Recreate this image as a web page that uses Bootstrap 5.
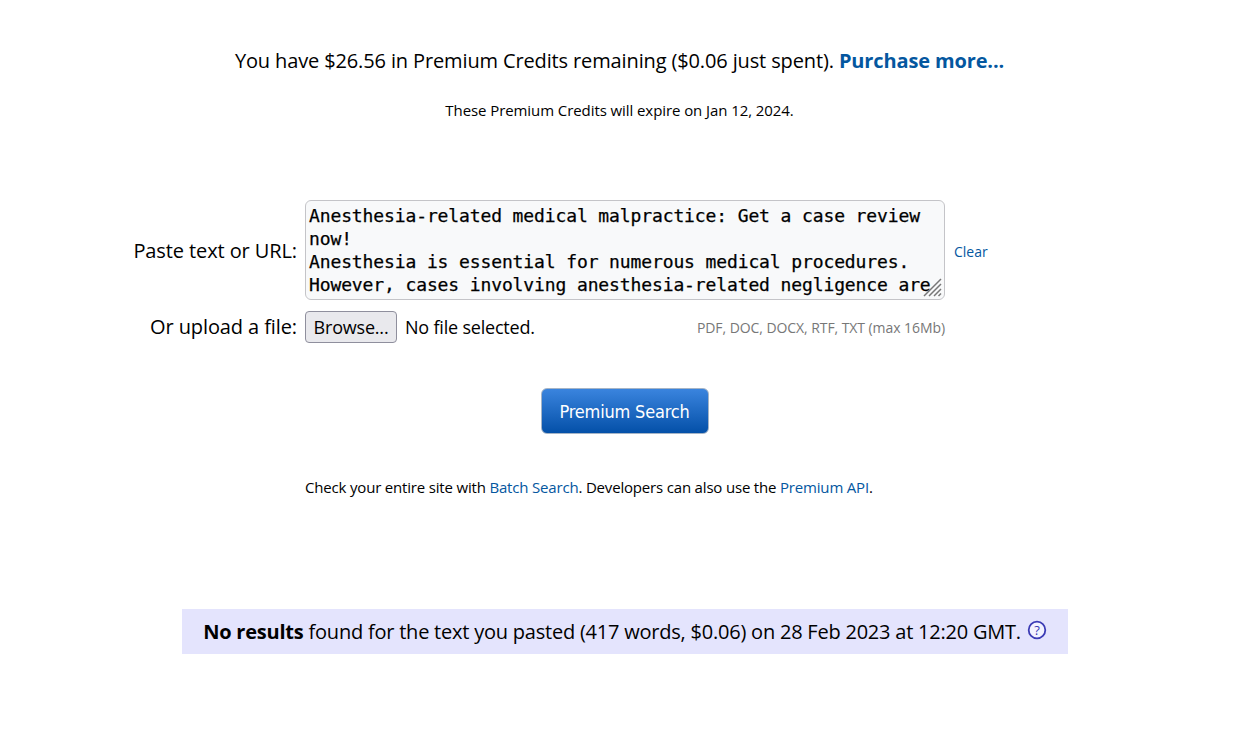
<!DOCTYPE html>
<html lang="en">
<head>
<meta charset="utf-8">
<title>Premium Search</title>
<link href="https://cdn.jsdelivr.net/npm/bootstrap@5.3.0/dist/css/bootstrap.min.css" rel="stylesheet">
<style>
body{font-family:"Open Sans","Noto Sans",sans-serif;color:#000;background:#fff;height:734px;overflow:hidden}
a{color:#04579f;text-decoration:none}
.credit-line{font-size:20px;line-height:28px;padding-top:47px;margin:0;letter-spacing:-.13px}
.credit-line a{font-weight:700}
.expire-line{font-size:15px;line-height:20px;margin:0;padding-top:25px;letter-spacing:-.08px}
.form-zone{padding-top:80px}
.label-col{width:297px;text-align:right;font-size:20px;flex:none;letter-spacing:-.1px}
.label-low{padding-top:2px}
.area-wrap{position:relative;width:640px;height:100px;margin-left:8px;flex:none}
.paste-area{display:block;width:640px;height:100px;padding:3px 3px;border:1px solid #c4c4c8;border-radius:6px;background:#f8f9fa;color:#000;font-family:"DejaVu Sans Mono",monospace;font-size:18px;line-height:23px;letter-spacing:-.12px;-webkit-text-stroke:.25px #000;overflow:hidden;resize:none;outline:0}
.grip{position:absolute;right:3px;bottom:3px;width:19px;height:19px}
.clear-link{font-size:14px;margin-left:9px;padding-top:2px}
.upload-row{margin-top:11px;height:32px}
.upload-inner{width:640px;margin-left:8px;flex:none}
.browse-btn{width:92px;height:32px;padding:0;border:1px solid #8f8f9d;border-radius:4px;background:#e9e9ed;color:#000;font-size:18px;line-height:28px;font-family:"Open Sans",sans-serif;letter-spacing:-.2px}
.file-none{font-size:18px;margin-left:8px;letter-spacing:-.2px}
.format-note{font-size:14px;color:#777;letter-spacing:-.07px}
.go-zone{padding:45px 0 0 10px}
.go-btn{width:168px;height:46px;padding:0;border:1px solid #a5b4c6;border-radius:6px;background:linear-gradient(#3a84de,#0450a8);color:#fff;font-family:"DejaVu Sans",sans-serif;font-stretch:condensed;font-size:18px;letter-spacing:-.2px}
.batch-line{font-size:15px;line-height:20px;margin:0;padding:43px 0 0 305px;letter-spacing:-.18px}
.result-strip{width:886px;height:45px;margin:112px 0 0 182px;background:#e4e4fd;font-size:20px;line-height:45px;text-align:center;letter-spacing:-.22px}
.help-icon{width:20px;height:20px;vertical-align:-1px;margin-left:1px}
</style>
</head>
<body>
<p class="credit-line text-center">You have $26.56 in Premium Credits remaining ($0.06 just spent). <a href="#">Purchase more...</a></p>
<p class="expire-line text-center">These Premium Credits will expire on Jan 12, 2024.</p>
<form class="form-zone">
  <div class="d-flex align-items-center">
    <label class="label-col label-low" for="pasted">Paste text or URL:</label>
    <div class="area-wrap">
      <textarea id="pasted" class="paste-area" spellcheck="false">Anesthesia-related medical malpractice: Get a case review now!
Anesthesia is essential for numerous medical procedures. However, cases involving anesthesia-related negligence are becoming more common across the country and patients deserve answers.</textarea>
      <svg class="grip" viewBox="0 0 19 19" aria-hidden="true"><path d="M18 1 1 18M18 6 6 18M18 11 11 18M18 15.500 15.500 18" stroke="#777" stroke-width="1.500" fill="none"/></svg>
    </div>
    <a href="#" class="clear-link">Clear</a>
  </div>
  <div class="d-flex align-items-center upload-row">
    <span class="label-col">Or upload a file:</span>
    <div class="upload-inner d-flex align-items-center">
      <button type="button" class="browse-btn">Browse...</button>
      <span class="file-none">No file selected.</span>
      <span class="format-note ms-auto">PDF, DOC, DOCX, RTF, TXT (max 16Mb)</span>
    </div>
  </div>
  <div class="go-zone text-center"><button type="button" class="go-btn">Premium Search</button></div>
</form>
<p class="batch-line">Check your entire site with <a href="#">Batch Search</a>. Developers can also use the <a href="#">Premium API</a>.</p>
<div class="result-strip"><b>No results</b> found for the text you pasted (417 words, $0.06) on 28 Feb 2023 at 12:20 GMT.
  <svg class="help-icon" viewBox="0 0 20 20" aria-hidden="true"><circle cx="10" cy="10" r="8.300" fill="#f2f2ff" stroke="#3b3bb5" stroke-width="1.800"/><text x="10" y="14.500" text-anchor="middle" font-size="13" fill="#3b3bb5" font-family="Open Sans, sans-serif">?</text></svg>
</div>
<script src="https://cdn.jsdelivr.net/npm/bootstrap@5.3.0/dist/js/bootstrap.bundle.min.js"></script>
</body>
</html>
